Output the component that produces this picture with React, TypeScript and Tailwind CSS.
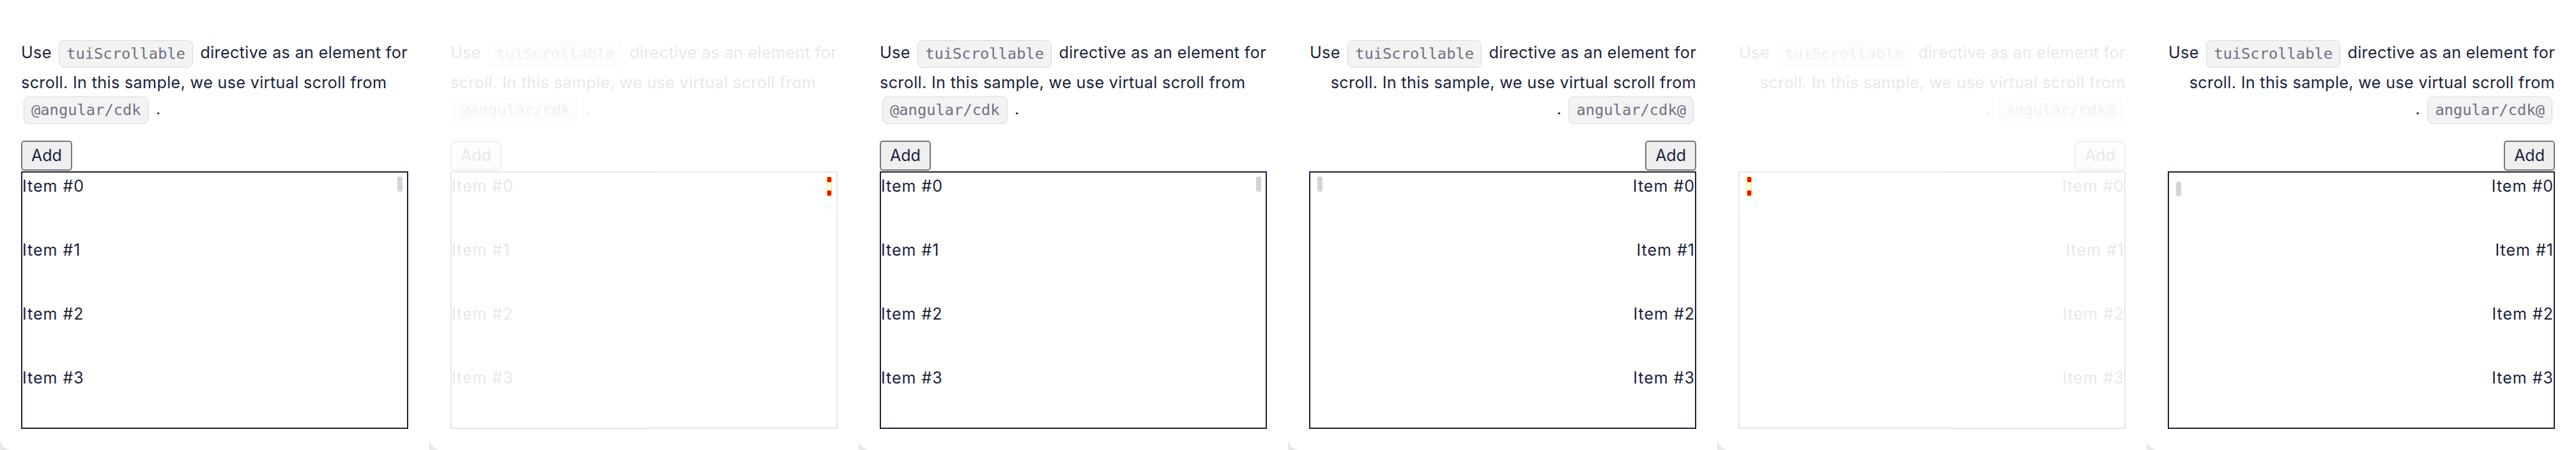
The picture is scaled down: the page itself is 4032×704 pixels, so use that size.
import React from "react";

type PanelProps = { rtl?: boolean; faded?: boolean; thumbLow?: boolean };

function Chip({ children }: { children: React.ReactNode }) {
  return (
    <span className="inline-block align-middle mx-[4px] px-[11px] py-[6px] leading-[29px] text-[23.75px] tracking-normal rounded-[8px] border border-[#d9d9dc] bg-[#f3f3f4] text-[#6f7080] font-['DejaVu_Sans_Mono','Liberation_Mono',monospace]">
      {children}
    </span>
  );
}

function FadedThumb() {
  return (
    <svg width="8" height="31" viewBox="0 0 8 31">
      <rect x="0.5" y="0.5" width="7" height="30" rx="2" fill="#ffffff" stroke="#ffee00" />
      <rect x="1" y="1" width="6" height="8" rx="1" fill="#ff0000" />
      <rect x="1" y="22" width="6" height="8" rx="1" fill="#ff0000" />
    </svg>
  );
}

function Panel({ rtl = false, faded = false, thumbLow = false }: PanelProps) {
  const items = [0, 1, 2, 3];
  return (
    <div className="relative w-[672px] h-[704px] shrink-0 bg-white rounded-bl-[18px]">
      <div className={`px-[33px] pt-[62px] ${faded ? "opacity-10" : ""}`}>
        <div
          className={`text-[25.25px] tracking-[0.3px] text-[#1b1f3b] whitespace-nowrap ${
            rtl ? "text-right" : "text-left"
          }`}
        >
          <div className="h-[47px] leading-[40px]">
            Use <Chip>tuiScrollable</Chip> directive as an element for
          </div>
          <div className="h-[41px] leading-[40px]">
            scroll. In this sample, we use virtual scroll from
          </div>
          <div className="h-[43px] leading-[40px]">
            {rtl ? (
              <>
                . <Chip>angular/cdk@</Chip>
              </>
            ) : (
              <>
                <Chip>@angular/cdk</Chip> .
              </>
            )}
          </div>
        </div>
        <div className={`mt-[27px] flex ${rtl ? "justify-end" : "justify-start"}`}>
          <button className="h-[47px] px-[14px] leading-[43px] text-[25px] text-[#1b1f3b] bg-[#efefef] border-2 border-[#767676] rounded-[5px]">
            Add
          </button>
        </div>
        <div className="relative mt-[1px] h-[403px] border-2 border-[#1b1f3b] overflow-hidden">
          {items.map((i) => (
            <div
              key={i}
              className={`h-[100px] leading-[42px] text-[25px] tracking-[1px] text-[#1b1f3b] ${
                rtl ? "text-right" : "text-left"
              }`}
            >
              Item #{i}
            </div>
          ))}
          {!faded && (
            <div
              className={`absolute w-[8px] rounded-full bg-[#d2d3d8] ${
                thumbLow ? "top-[14px] h-[23px]" : "top-[6px] h-[24px]"
              } ${rtl ? "left-[11px]" : "right-[7px]"}`}
            />
          )}
        </div>
      </div>
      {faded && (
        <div className={`absolute top-[276px] ${rtl ? "left-[46px]" : "left-[622px]"}`}>
          <FadedThumb />
        </div>
      )}
    </div>
  );
}

export default function App() {
  return (
    <div className="flex w-[4032px] h-[704px] bg-[#e8e8e8] font-['Inter','Noto_Sans',sans-serif] overflow-hidden">
      <Panel />
      <Panel faded />
      <Panel />
      <Panel rtl />
      <Panel rtl faded />
      <Panel rtl thumbLow />
    </div>
  );
}
